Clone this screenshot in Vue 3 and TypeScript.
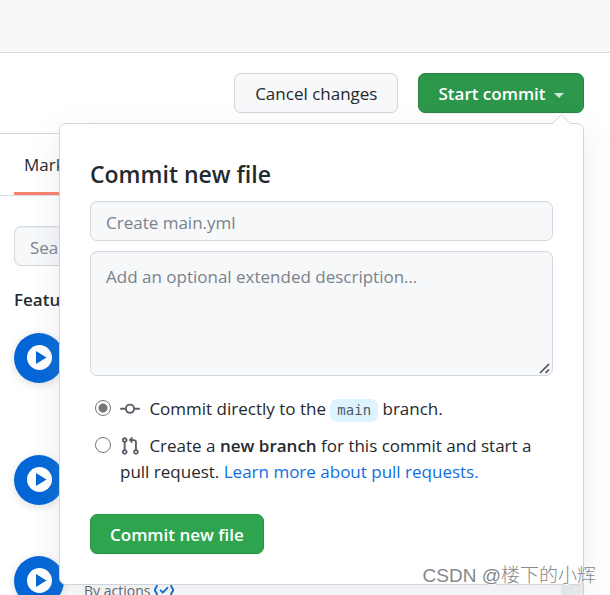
<script setup lang="ts">
import { ref } from 'vue'

interface ActionItem {
  id: number
  author: string
  roomy: boolean
}

const target = ref<'direct' | 'branch'>('direct')
const title = ref('')
const description = ref('')
const search = ref('')

const actions: ActionItem[] = [
  { id: 1, author: '', roomy: true },
  { id: 2, author: '', roomy: false },
  { id: 3, author: 'actions', roomy: false },
]
</script>

<template>
  <div class="page">
    <header class="topbar"></header>

    <div class="toolbar">
      <button type="button" class="btn">Cancel changes</button>
      <div class="dropdown">
        <button type="button" class="btn btn-primary open">
          Start commit <span class="caret"></span>
        </button>

        <form class="popover" @submit.prevent>
          <svg class="arrow" width="20" height="10" viewBox="0 0 20 10" aria-hidden="true">
            <path d="M0 10 L9.5 .7 L19 10" fill="#fff" stroke="#d1d5da" />
          </svg>
          <h3>Commit new file</h3>
          <input v-model="title" class="field" type="text" placeholder="Create main.yml" aria-label="Commit message" />
          <div class="area">
            <textarea
              v-model="description"
              class="field"
              placeholder="Add an optional extended description…"
              aria-label="Extended description"
            ></textarea>
            <svg class="grip" width="12" height="12" viewBox="0 0 12 12" aria-hidden="true">
              <path d="M1 11 L10 2 M6.5 11 L10 7.5" stroke="#4b4f54" stroke-width="1.6" />
            </svg>
          </div>

          <div class="choices">
            <div class="choice">
              <input id="direct" v-model="target" type="radio" name="target" value="direct" />
              <label for="direct">
                <svg class="icon" width="20" height="20" viewBox="0 0 16 16" aria-hidden="true">
                  <path
                    fill-rule="evenodd"
                    d="M10.5 7.75a2.5 2.5 0 11-5 0 2.5 2.5 0 015 0zm1.43.75a4.002 4.002 0 01-7.86 0H.75a.75.75 0 110-1.5h3.32a4.001 4.001 0 017.86 0h3.32a.75.75 0 110 1.5h-3.32z"
                  />
                </svg>
                Commit directly to the <code>main</code> branch.
              </label>
            </div>
            <div class="choice">
              <input id="branch" v-model="target" type="radio" name="target" value="branch" />
              <label for="branch">
                <svg class="icon" width="20" height="20" viewBox="0 0 16 16" aria-hidden="true">
                  <path
                    fill-rule="evenodd"
                    d="M7.177 3.073L9.573.677A.25.25 0 0110 .854v4.792a.25.25 0 01-.427.177L7.177 3.427a.25.25 0 010-.354zM3.75 2.5a.75.75 0 100 1.5.75.75 0 000-1.5zm-2.25.75a2.25 2.25 0 113 2.122v5.256a2.251 2.251 0 11-1.5 0V5.372A2.25 2.25 0 011.5 3.25zM11 2.5h-1V4h1a1 1 0 011 1v5.628a2.251 2.251 0 101.5 0V5A2.5 2.5 0 0011 2.5zm1 10.25a.75.75 0 111.5 0 .75.75 0 01-1.5 0zM3.75 12a.75.75 0 100 1.5.75.75 0 000-1.5z"
                  />
                </svg>
                Create a <strong>new branch</strong> for this commit and start a pull request.
                <a href="#">Learn more about pull requests.</a>
              </label>
            </div>
          </div>

          <button type="submit" class="btn btn-primary">Commit new file</button>
        </form>
      </div>
    </div>

    <aside class="sidebar">
      <nav class="tabs"><a href="#" class="tab">Marketplace</a></nav>
      <div class="panel">
        <input v-model="search" class="field" type="text" placeholder="Search Marketplace" aria-label="Search Marketplace" />
        <h4>Featured Actions</h4>
        <ul>
          <li v-for="item in actions" :key="item.id" :class="{ roomy: item.roomy }">
            <span class="avatar">
              <svg width="26" height="26" viewBox="0 0 26 26" aria-hidden="true">
                <circle cx="13.5" cy="12.5" r="12.5" fill="#fff" />
                <path d="M10 6 L20.5 12.5 L10 19z" fill="#0366d6" />
              </svg>
            </span>
            <span v-if="item.author" class="author">
              By {{ item.author }}
              <svg width="20" height="20" viewBox="0 0 16 16" fill="#0366d6" aria-hidden="true">
                <path
                  fill-rule="evenodd"
                  d="M9.585.52a2.678 2.678 0 00-3.17 0l-.928.68a1.178 1.178 0 01-.518.215L3.83 1.59a2.678 2.678 0 00-2.24 2.24l-.175 1.14a1.178 1.178 0 01-.215.518l-.68.928a2.678 2.678 0 000 3.17l.68.928c.113.153.186.33.215.518l.175 1.138a2.678 2.678 0 002.24 2.24l1.138.175c.187.029.365.102.518.215l.928.68a2.678 2.678 0 003.17 0l.928-.68a1.17 1.17 0 01.518-.215l1.138-.175a2.678 2.678 0 002.241-2.241l.175-1.138c.029-.187.102-.365.215-.518l.68-.928a2.678 2.678 0 000-3.17l-.68-.928a1.179 1.179 0 01-.215-.518L14.41 3.83a2.678 2.678 0 00-2.24-2.24l-1.138-.175a1.179 1.179 0 01-.518-.215L9.585.52zM7.303 1.728c.415-.305.98-.305 1.394 0l.928.68c.348.256.752.423 1.18.489l1.136.174c.51.078.909.478.987.987l.174 1.137c.066.427.233.831.489 1.18l.68.927c.305.415.305.98 0 1.394l-.68.928a2.678 2.678 0 00-.489 1.18l-.174 1.136a1.178 1.178 0 01-.987.987l-1.137.174a2.678 2.678 0 00-1.18.489l-.927.68c-.415.305-.98.305-1.394 0l-.928-.68a2.678 2.678 0 00-1.18-.489l-1.136-.174a1.178 1.178 0 01-.987-.987l-.174-1.137a2.678 2.678 0 00-.489-1.18l-.68-.927a1.178 1.178 0 010-1.394l.68-.928c.256-.348.423-.752.489-1.18l.174-1.136c.078-.51.478-.909.987-.987l1.137-.174a2.678 2.678 0 001.18-.489l.927-.68zM11.28 6.78a.75.75 0 00-1.06-1.06L7 8.94 5.78 7.72a.75.75 0 00-1.06 1.06l1.75 1.75a.75.75 0 001.06 0l3.75-3.75z"
                />
              </svg>
            </span>
          </li>
        </ul>
      </div>
      <div class="track"></div>
    </aside>

    <div class="watermark">CSDN @楼下的小辉</div>
  </div>
</template>

<style>
body {
  margin: 0;
  background: #fff;
}
</style>

<style scoped>
* {
  box-sizing: border-box;
}
.page {
  position: relative;
  display: flex;
  flex-direction: column;
  height: 100vh;
  overflow: hidden;
  color: #24292e;
  font: 17px/26px 'Open Sans', 'Noto Sans', sans-serif;
}
.topbar {
  flex: none;
  height: 53px;
  background: #f6f8fa;
  border-bottom: 1px solid #d5dae0;
}
.toolbar {
  display: flex;
  flex: none;
  justify-content: flex-end;
  gap: 20px;
  padding: 20px 26px;
}
.dropdown {
  position: relative;
}
.btn {
  height: 40px;
  padding: 2px 20px 0;
  color: #24292e;
  background: #f6f8fa;
  border: 1px solid #d3d6d9;
  border-radius: 7px;
  box-shadow: 0 1px 0 rgba(27, 31, 35, 0.04);
  font: 500 17px/26px 'Open Sans', 'Noto Sans', sans-serif;
  white-space: nowrap;
}
.btn-primary {
  padding: 2px 19px 0;
  color: #fff;
  background: #2ea44f;
  border-color: #2a9247;
  font-weight: 600;
}
.btn-primary.open {
  background: #2c974b;
  border-color: #29843f;
}
.caret {
  display: inline-block;
  margin-left: 4px;
  border: 5px solid transparent;
  border-top-color: #cfe7d6;
  border-bottom: 0;
  vertical-align: middle;
}
.popover {
  position: absolute;
  z-index: 2;
  top: calc(100% + 10px);
  right: 0;
  width: 525px;
  max-width: calc(100vw - 52px);
  padding: 30px;
  background: #fff;
  border: 1px solid #d1d5da;
  border-radius: 7px;
  box-shadow: 0 10px 30px rgba(149, 157, 165, 0.2);
}
.arrow {
  position: absolute;
  top: -10px;
  right: 11px;
}
h3 {
  margin: 4px 0 11px;
  font-size: 23px;
  font-weight: 600;
  line-height: 32px;
}
.field {
  display: block;
  width: 100%;
  height: 40px;
  padding: 2px 15px 0;
  color: #24292e;
  background: #f6f8fa;
  border: 1px solid #d1d8e0;
  border-radius: 7px;
  box-shadow: inset 0 1px 0 rgba(225, 228, 232, 0.3);
  font: 17px/26px 'Open Sans', 'Noto Sans', sans-serif;
}
.field::placeholder {
  color: #7a828b;
  opacity: 1;
}
.area {
  position: relative;
  margin-top: 10px;
}
textarea.field {
  height: 125px;
  padding-top: 12px;
  resize: vertical;
}
textarea.field::-webkit-resizer {
  display: none;
}
.grip {
  position: absolute;
  right: 2px;
  bottom: 2px;
  pointer-events: none;
}
.choices {
  display: grid;
  gap: 11px;
  margin: 20px 0 29px;
}
.choice {
  display: flex;
  gap: 9px;
  padding-left: 5px;
}
.choice input {
  flex: none;
  width: 16px;
  height: 16px;
  margin: 4px 0 0;
  appearance: none;
  background: #fff;
  border: 1px solid #767676;
  border-radius: 50%;
}
.choice input:checked {
  background: radial-gradient(circle, #767676 4px, #fff 5px);
}
.icon {
  margin-right: 5px;
  fill: #586069;
  vertical-align: -4px;
}
strong {
  font-weight: 600;
}
code {
  display: inline-block;
  padding: 0 7px;
  color: #4f5a66;
  background: #ddf4ff;
  border-radius: 7px;
  font: 14px/23px 'DejaVu Sans Mono', monospace;
}
.choice a {
  color: #0f6fe0;
  text-decoration: none;
}
.sidebar {
  display: grid;
  flex: 1;
  grid-template-columns: 1fr 22px;
  grid-template-rows: 63px 1fr;
  min-height: 0;
  margin-right: 26px;
  overflow: hidden;
  border: 1px solid #d1d5da;
  border-width: 1px 1px 0 0;
}
.tabs {
  display: flex;
  grid-column: 1 / -1;
  padding-left: 14px;
  border-bottom: 1px solid #d8dde3;
  height: 62px;
}
.tab {
  padding: 18px 10px 0;
  color: #24292e;
  border-bottom: 3px solid #f9826c;
  font-weight: 500;
  text-decoration: none;
}
.panel {
  padding: 29px 14px 0;
  min-height: 0;
}
h4 {
  margin: 21px 0 20px;
  font-size: 17px;
  font-weight: 600;
  line-height: 26px;
}
ul {
  margin: 0;
  padding: 0;
  list-style: none;
}
li {
  display: flex;
  gap: 20px;
  height: 101px;
}
li.roomy {
  height: 122px;
}
.avatar {
  display: grid;
  place-items: center;
  flex: none;
  width: 50px;
  height: 50px;
  background: #0366d6;
  border-radius: 50%;
  box-shadow: 0 2px 8px rgba(27, 31, 35, 0.15);
}
.author {
  padding-top: 22px;
  color: #586069;
  font-size: 14px;
}
.author svg {
  vertical-align: -4px;
}
.track {
  background: #eceef0;
}
.watermark {
  position: absolute;
  z-index: 3;
  right: 14px;
  bottom: 5px;
  color: #85878a;
  font: 300 19px/28px 'Liberation Sans', 'Noto Sans CJK SC', sans-serif;
  text-shadow: 1px 1px 0 #fff;
}
</style>
